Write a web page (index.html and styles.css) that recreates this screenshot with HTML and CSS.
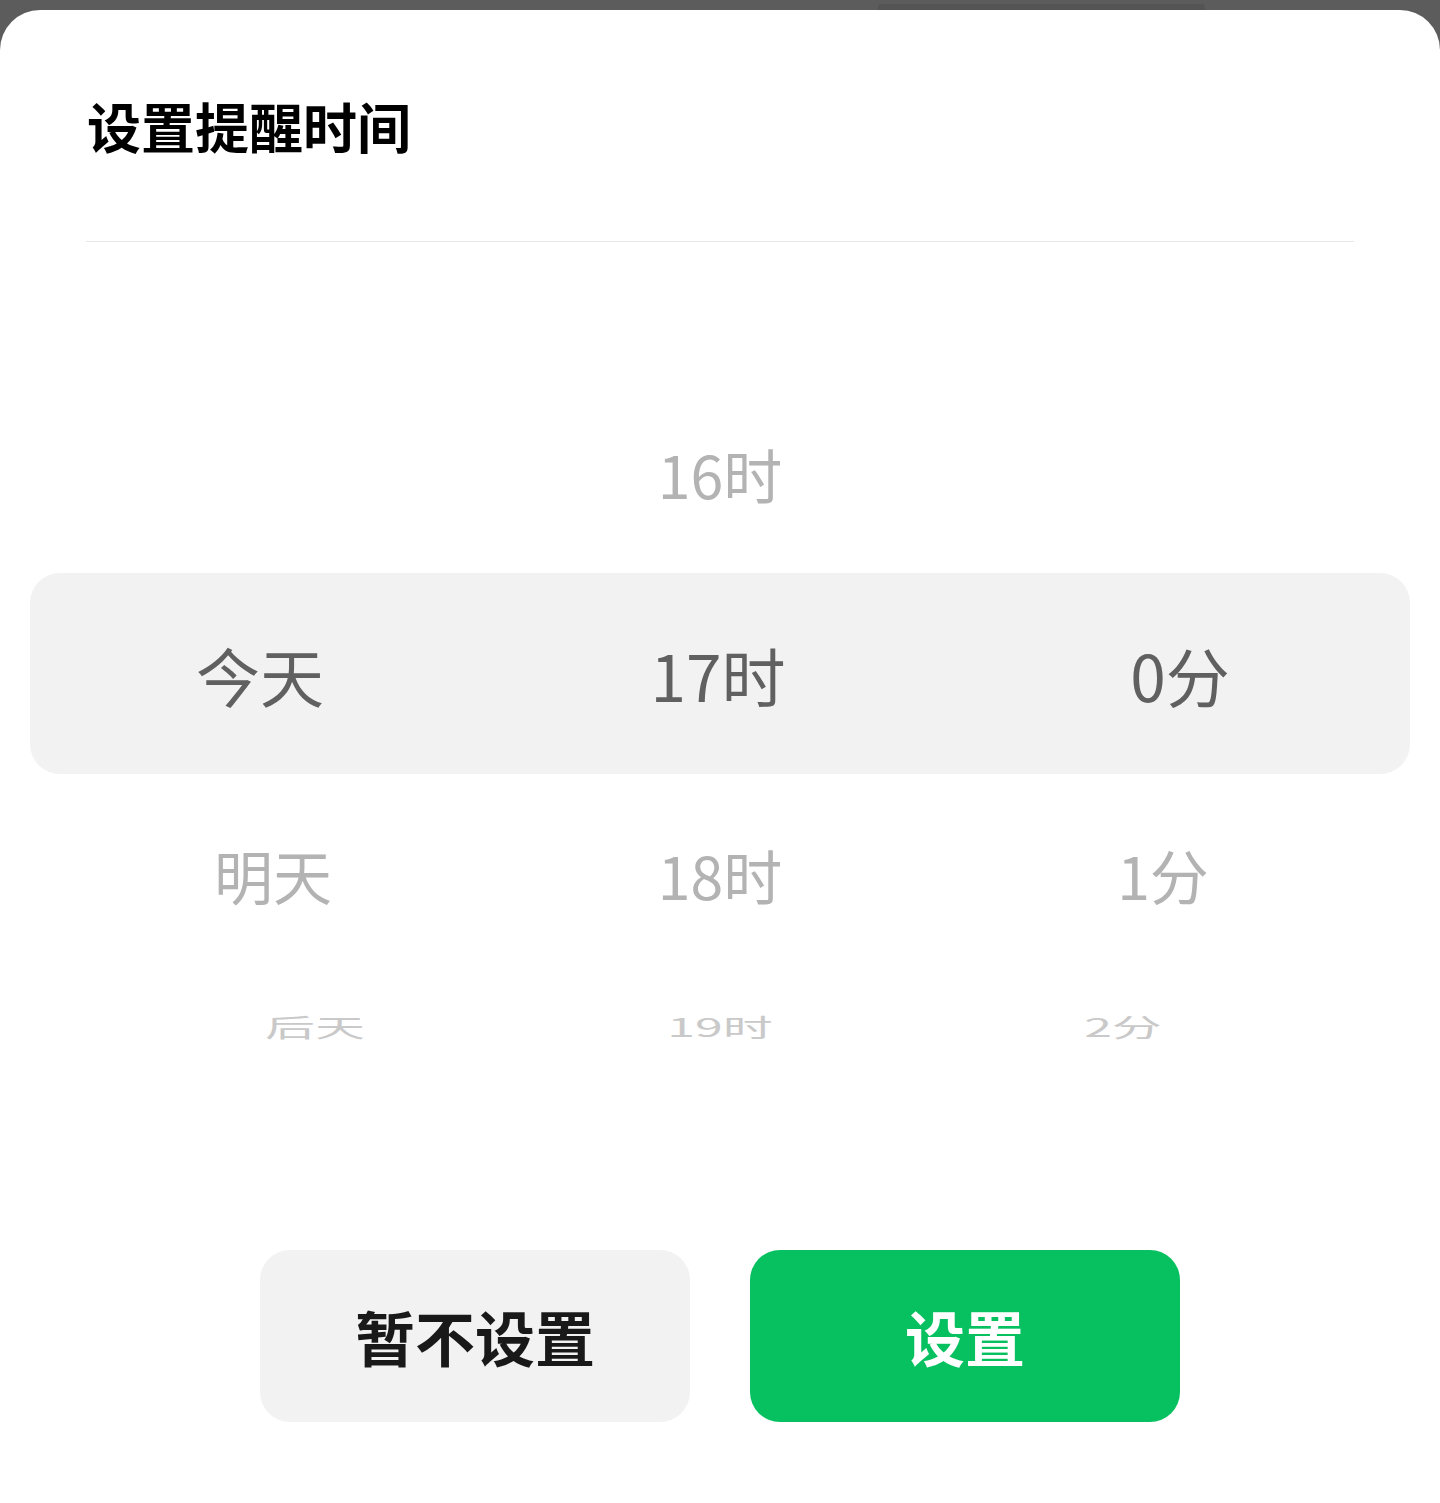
FILE: index.html
```html
<!DOCTYPE html>
<html lang="zh-CN">
<head>
<meta charset="utf-8">
<title>设置提醒时间</title>
<link rel="stylesheet" href="styles.css">
</head>
<body>
<div class="backdrop"><div class="pill"></div></div>
<div class="sheet">
  <div class="header"><h1 class="title">设置提醒时间</h1></div>
  <div class="divider"></div>
  <div class="picker">
    <div class="row row-prev">
      <span class="cell left"></span>
      <span class="cell mid">16时</span>
      <span class="cell right"></span>
    </div>
    <div class="row row-current">
      <span class="cell left">今天</span>
      <span class="cell mid">17时</span>
      <span class="cell right">0分</span>
    </div>
    <div class="row row-next">
      <span class="cell left">明天</span>
      <span class="cell mid">18时</span>
      <span class="cell right">1分</span>
    </div>
    <div class="row row-far">
      <span class="cell left">后天</span>
      <span class="cell mid">19时</span>
      <span class="cell right">2分</span>
    </div>
  </div>
  <div class="actions">
    <button class="btn btn-secondary">暂不设置</button>
    <button class="btn btn-primary">设置</button>
  </div>
</div>
</body>
</html>
```

FILE: styles.css
```css
html, body {
  margin: 0;
  padding: 0;
}
body {
  background: #5c5c5c;
  font-family: "Noto Sans CJK SC", "Noto Sans", sans-serif;
  width: 1440px;
  height: 1503px;
  overflow: hidden;
}
.backdrop {
  height: 10px;
  padding: 4px 0 0 878px;
  box-sizing: border-box;
}
.pill {
  width: 327px;
  height: 6px;
  background: #545454;
  border-radius: 3px 3px 0 0;
}
.sheet {
  background: #ffffff;
  border-radius: 40px 40px 0 0;
  height: 1493px;
}
.header {
  height: 231px;
  box-sizing: border-box;
  padding: 89px 0 0 87px;
}
.title {
  margin: 0;
  font-size: 54px;
  line-height: 54px;
  font-weight: 700;
  color: #000000;
  letter-spacing: 0;
}
.divider {
  height: 1px;
  background: #e8e8e8;
  margin: 0 86px;
}
.picker {
  padding-top: 131px;
}
.row {
  display: grid;
  grid-template-columns: repeat(3, 1fr);
  align-items: center;
  height: 200px;
  margin: 0 30px;
}
.cell {
  display: block;
  text-align: center;
  line-height: 1;
  white-space: nowrap;
}
.row-prev .cell {
  font-size: 59px;
  color: #b3b3b3;
}
.row-current {
  background: #f2f2f2;
  border-radius: 30px;
  height: 201px;
}
.row-current .cell {
  font-size: 64px;
  color: #606060;
}
.row-current .mid {
  transform: translateX(-2px);
}
.row-next .cell {
  font-size: 59px;
  color: #b3b3b3;
}
.row-next .left {
  transform: translateX(13px);
}
.row-next .right {
  transform: translateX(-17px);
}
.row-far {
  height: 104px;
}
.row-far .cell {
  font-size: 50px;
  color: #c9c9c9;
}
.row-far .left {
  transform: translateX(55px) scaleY(0.5);
}
.row-far .mid {
  transform: scaleY(0.5);
}
.row-far .right {
  transform: translateX(-57px) scaleY(0.5);
}
.actions {
  display: flex;
  justify-content: center;
  gap: 60px;
  margin-top: 172px;
}
.btn {
  width: 430px;
  height: 172px;
  border: none;
  border-radius: 30px;
  font-family: "Noto Sans CJK SC", sans-serif;
  font-size: 60px;
  font-weight: 700;
  line-height: 1;
  padding: 0;
}
.btn-secondary {
  background: #f2f2f2;
  color: #191919;
}
.btn-primary {
  background: #07c160;
  color: #ffffff;
}
```
